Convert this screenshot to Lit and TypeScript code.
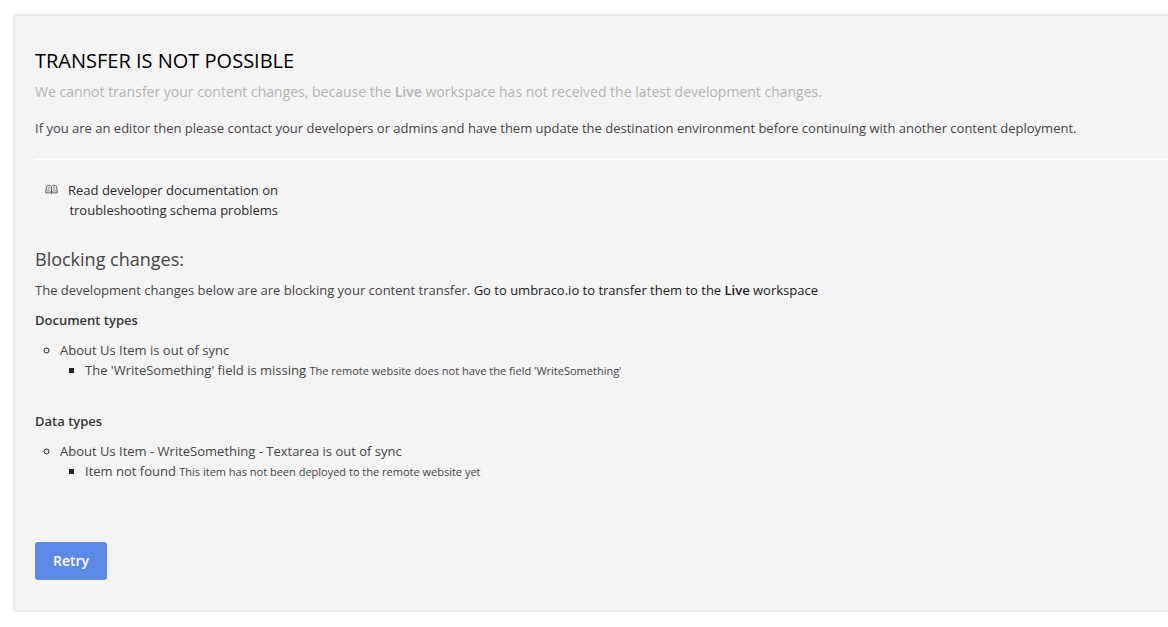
import { LitElement, html, css } from "lit";
import { customElement } from "lit/decorators.js";

interface Issue {
  title: string;
  problem: string;
  detail: string;
}

interface Group {
  name: string;
  issues: Issue[];
}

const groups: Group[] = [
  {
    name: "Document types",
    issues: [
      {
        title: "About Us Item is out of sync",
        problem: "The 'WriteSomething' field is missing",
        detail: "The remote website does not have the field 'WriteSomething'",
      },
    ],
  },
  {
    name: "Data types",
    issues: [
      {
        title: "About Us Item - WriteSomething - Textarea is out of sync",
        problem: "Item not found",
        detail: "This item has not been deployed to the remote website yet",
      },
    ],
  },
];

@customElement("app-root")
export class AppRoot extends LitElement {
  static styles = css`
    :host {
      display: block;
      padding: 14px 0 14px 13px;
      background: #fff;
      color: #444;
      font: 400 13px/20px "Open Sans", sans-serif;
    }
    .panel {
      padding: 30px 0 30px 20px;
      border: 2px solid #e9e9e9;
      border-right: 0;
      border-radius: 3px 0 0 3px;
      background: #f4f4f4;
    }
    h1, h2, h3, p, ul {
      margin: 0;
      font-weight: 400;
    }
    h1 {
      font-size: 20px;
      font-weight: 500;
      line-height: 30px;
      color: #000;
      text-transform: uppercase;
    }
    .lead {
      margin-bottom: 10px;
      font-size: 14px;
      line-height: 32px;
      color: #b3b3b3;
    }
    strong, h3 {
      font-weight: 600;
    }
    .rule {
      margin: 21px 0 20px;
      border: 0;
      border-top: 1px solid #fff;
    }
    a {
      color: #1a1a1a;
      text-decoration: none;
    }
    .docs {
      display: inline-flex;
      gap: 10px;
      padding-left: 10px;
      color: #2a2a2a;
      text-align: right;
    }
    .docs svg {
      width: 13px;
      height: 20px;
    }
    h2 {
      margin-top: 24px;
      font-size: 18px;
      line-height: 30px;
    }
    .intro {
      margin: 6px 0 10px;
    }
    h3 {
      margin-bottom: 10px;
      font-size: 13px;
      color: #343434;
    }
    ul {
      padding-left: 25px;
      list-style: circle;
    }
    ul ul {
      list-style: square;
    }
    li::marker {
      color: #222;
    }
    .group {
      margin-bottom: 30px;
    }
    small {
      font-size: 11px;
    }
    button {
      display: block;
      margin-top: 60px;
      padding: 9px 18px;
      border: 0;
      border-radius: 3px;
      background: #5c89e6;
      color: #fff;
      font: 600 14px/20px "Open Sans", sans-serif;
    }
  `;

  render() {
    return html`
      <main class="panel">
        <h1>Transfer is not possible</h1>
        <p class="lead">We cannot transfer your content changes, because the <strong>Live</strong> workspace has not received the latest development changes.</p>
        <p>If you are an editor then please contact your developers or admins and have them update the destination environment before continuing with another content deployment.</p>
        <hr class="rule" />
        <a class="docs" href="#">
          <svg viewBox="0 0 13 20" fill="none" stroke="#444" aria-hidden="true">
            <path stroke-width=".8" d="M6.500 6.500C5.500 4.900 2.600 4.900 1.500 6.300L.6 12.800H5.200L6.500 13.500L7.800 12.800H12.400L11.500 6.300C10.400 4.900 7.500 4.900 6.500 6.500V13.500" />
            <path stroke-width=".6" d="M1.200 11.400C2.800 10.600 5.300 10.700 6.500 12.200C7.700 10.700 10.200 10.600 11.800 11.400M2.700 7.300C3.500 7 4.500 7 5.200 7.500M2.500 9.200C3.400 8.900 4.500 8.900 5.200 9.300M10.300 7.300C9.500 7 8.500 7 7.800 7.500M10.500 9.200C9.600 8.900 8.500 8.900 7.800 9.300" />
          </svg>
          <span>Read developer documentation on<br />troubleshooting schema problems</span>
        </a>
        <h2>Blocking changes:</h2>
        <p class="intro">The development changes below are are blocking your content transfer. <a href="#">Go to umbraco.io to transfer them to the <strong>Live</strong> workspace</a></p>
        ${groups.map(
          (group) => html`
            <section class="group">
              <h3>${group.name}</h3>
              <ul>
                ${group.issues.map(
                  (issue) => html`<li>${issue.title}
                    <ul>
                      <li>${issue.problem} <small>${issue.detail}</small></li>
                    </ul>
                  </li>`
                )}
              </ul>
            </section>
          `
        )}
        <button type="button">Retry</button>
      </main>
    `;
  }
}
